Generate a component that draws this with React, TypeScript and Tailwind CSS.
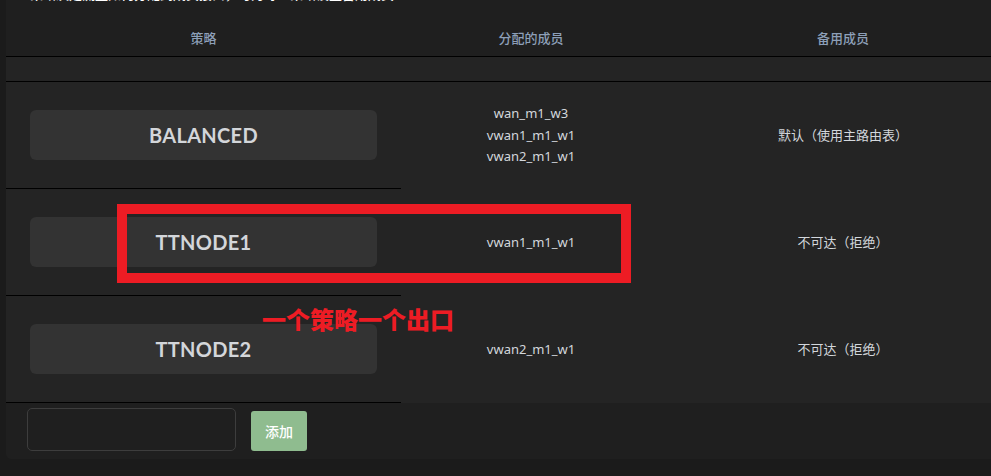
const strategies = [
  { name: "BALANCED", members: ["wan_m1_w3", "vwan1_m1_w1", "vwan2_m1_w1"], fallback: "默认（使用主路由表）" },
  { name: "TTNODE1", members: ["vwan1_m1_w1"], fallback: "不可达（拒绝）" },
  { name: "TTNODE2", members: ["vwan2_m1_w1"], fallback: "不可达（拒绝）" },
]

const cols = "grid grid-cols-[395px_260px_364px]"

export default function App() {
  return (
    <div className="relative w-[991px] h-[476px] overflow-hidden bg-[#1b1b1b] font-['Noto_Sans','Noto_Sans_CJK_SC',sans-serif]">
      <div className="ml-[6px] w-[1019px] bg-[#1f1f1f] rounded-bl-[5px]">
        {/* header */}
        <div className="h-[57px] flex flex-col border-b border-black">
          <p className="-mt-[15px] pl-[24px] text-[13px] leading-[18px] font-medium text-white whitespace-nowrap">
            策略决定流量如何分配到成员接口，可为每个策略设置备用成员
          </p>
          <div className={`${cols} mt-auto pb-[9px] text-[13px] leading-[18px] font-medium text-[#8d9fb8] text-center`}>
            <div>策略</div>
            <div>分配的成员</div>
            <div>备用成员</div>
          </div>
        </div>

        <div className="h-[25px] bg-[#242424] border-b border-black" />

        {strategies.map((s) => (
          <div key={s.name} className={`${cols} bg-[#242424]`}>
            <div className="h-[107px] border-b border-black flex items-center px-[24px]">
              <div className="w-full h-[50px] rounded-[6px] bg-[#333333] flex items-center justify-center font-['Lato',sans-serif] font-bold text-[20px] tracking-[0.3px] text-[#d3d6da]">
                {s.name}
              </div>
            </div>
            <div className="flex flex-col items-center justify-center text-[13px] leading-[21.5px] text-[#d3d7dc]">
              {s.members.map((m) => (
                <div key={m}>{m}</div>
              ))}
            </div>
            <div className="flex items-center justify-center text-[13px] text-[#d3d7dc]">{s.fallback}</div>
          </div>
        ))}

        {/* footer */}
        <div className="h-[56px] flex items-start pl-[21px] pt-[5px]">
          <input
            type="text"
            className="w-[209px] h-[43px] rounded-[5px] border border-[#3d3d3d] bg-[#1f1f1f] outline-none"
          />
          <button className="ml-[15px] mt-[3px] w-[56px] h-[40px] rounded-[3px] bg-[#8fbc8f] text-white text-[14px] font-medium">
            添加
          </button>
        </div>
      </div>

      {/* annotation overlay */}
      <div className="absolute left-[117px] top-[204px] w-[514px] h-[79px] border-[10px] border-[#ed1c24]" />
      <div className="absolute left-[262px] top-[305px] text-[24px] leading-[28px] font-black text-[#ed1c24] font-['Noto_Sans_CJK_SC',sans-serif]">
        一个策略一个出口
      </div>
    </div>
  )
}
